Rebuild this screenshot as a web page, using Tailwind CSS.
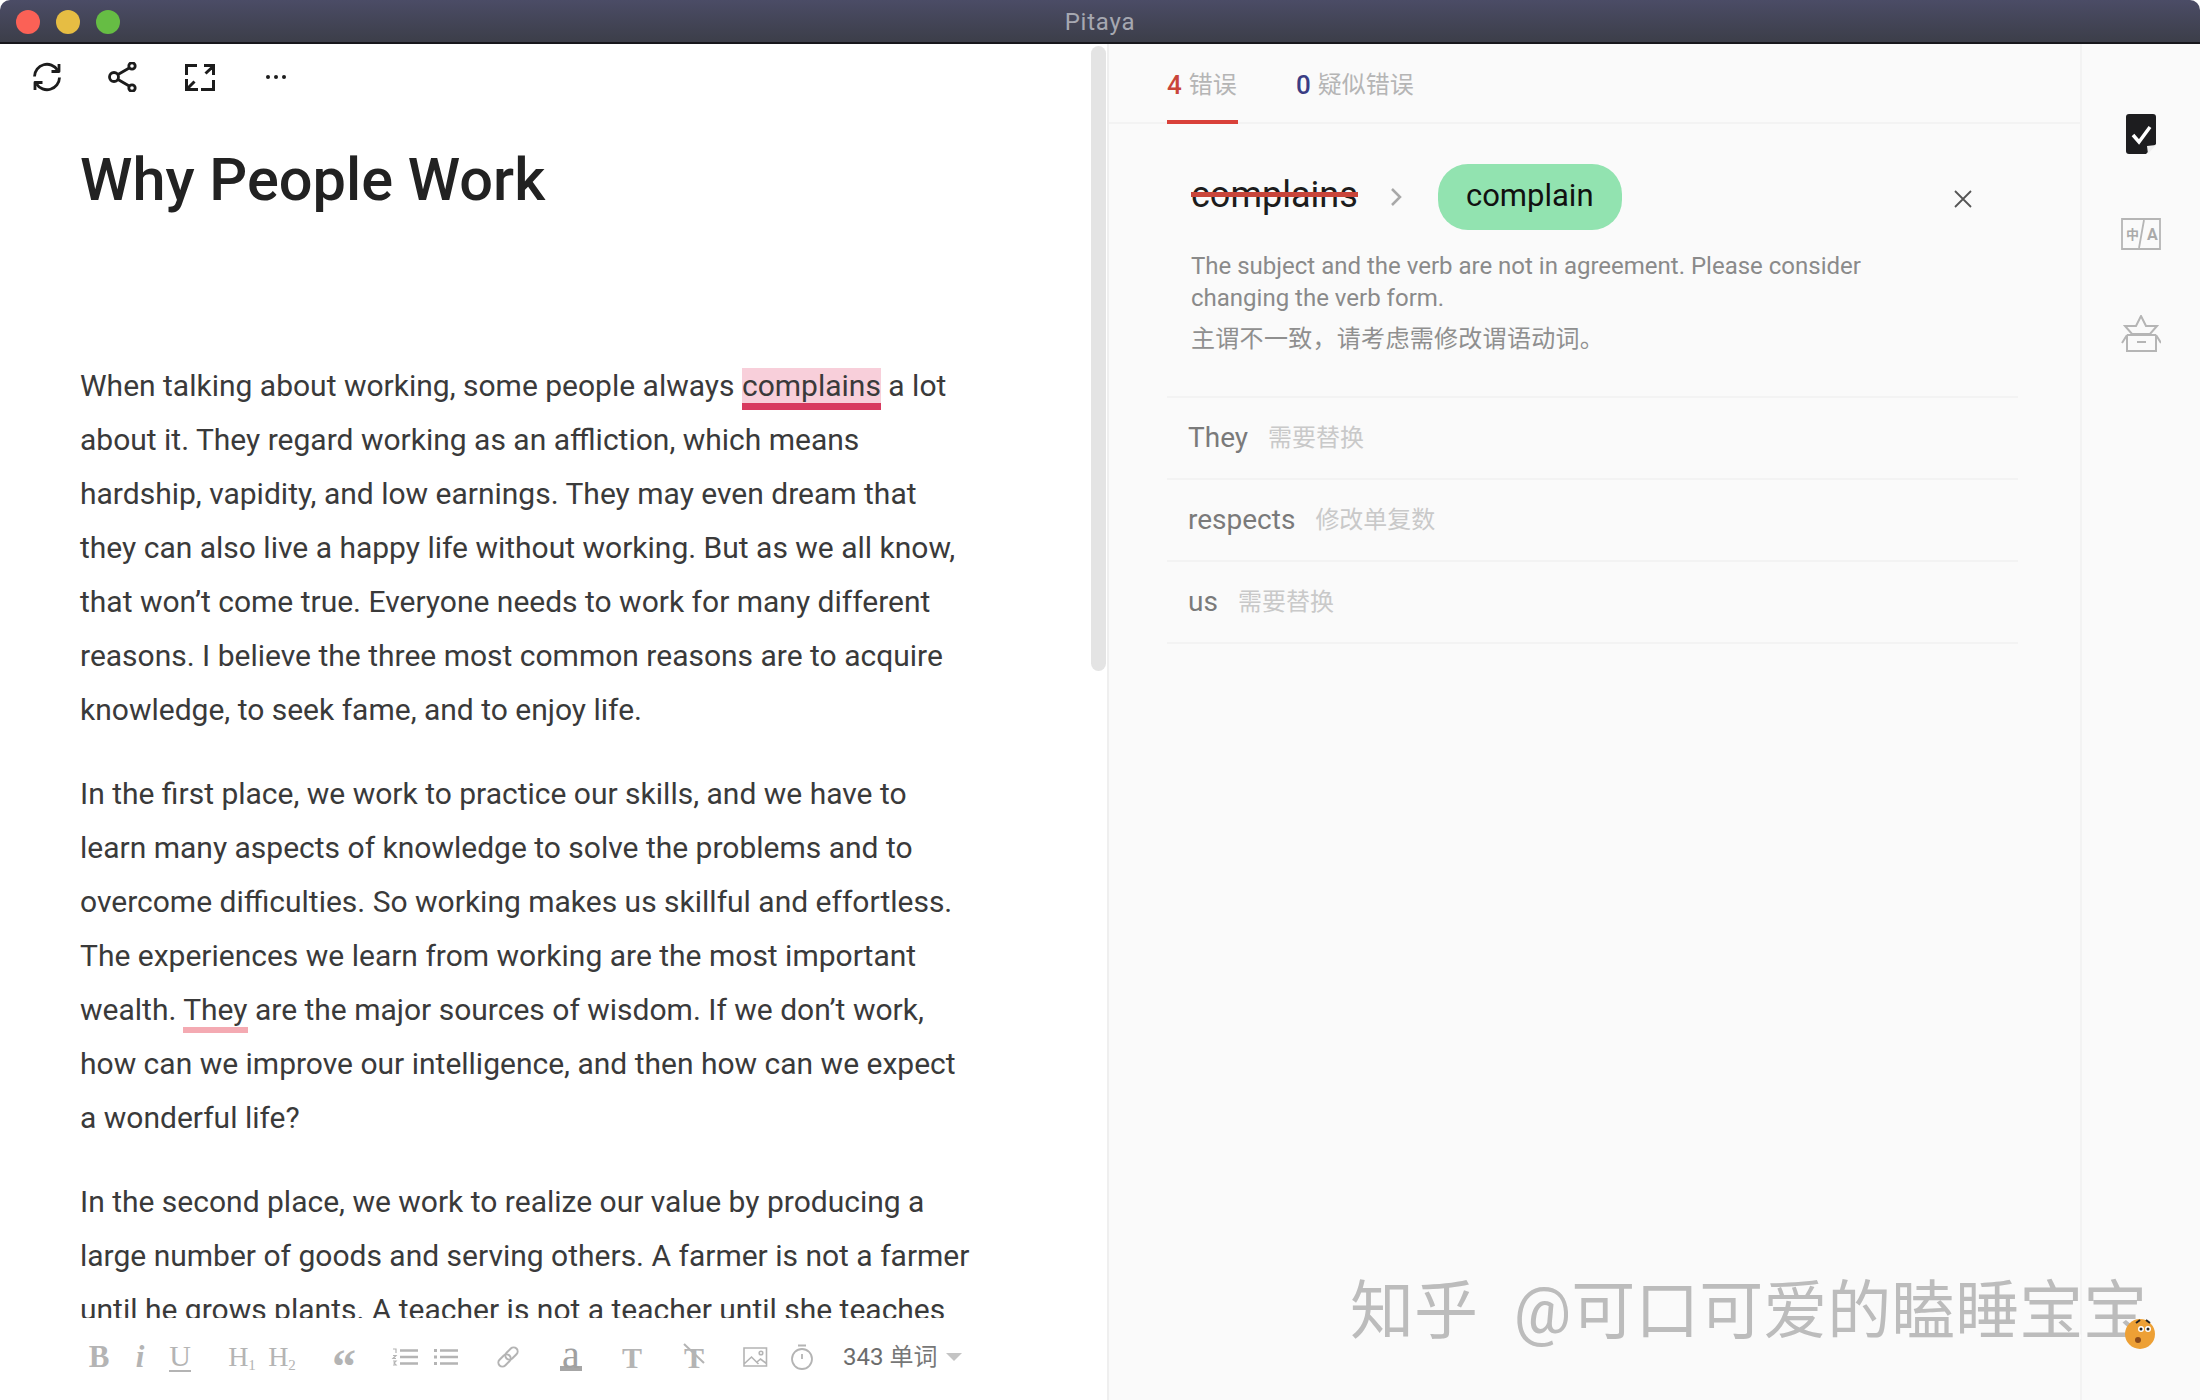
<!DOCTYPE html>
<html lang="en">
    <head>
        <meta charset="UTF-8" />
        <meta name="viewport" content="width=device-width, initial-scale=1.0" />
        <script src="https://cdn.jsdelivr.net/npm/@tailwindcss/browser@4"></script>
        <title>Pitaya</title>
    </head>
    <body class="bg-white">
        <div class="relative flex h-[1400px] w-[2200px] flex-col overflow-hidden font-['Roboto','Noto_Sans_CJK_SC',sans-serif]">
            <!-- title bar -->
            <div class="relative flex h-[44px] shrink-0 items-center justify-center rounded-t-[10px] border-b-2 border-[#17171c] bg-gradient-to-b from-[#4b4c66] to-[#3c3e49]">
                <div class="absolute left-[16px] top-[10px] flex gap-[16px]">
                    <span class="h-[24px] w-[24px] rounded-full bg-[#fb6156]"></span>
                    <span class="h-[24px] w-[24px] rounded-full bg-[#e6bd43]"></span>
                    <span class="h-[24px] w-[24px] rounded-full bg-[#66bd44]"></span>
                </div>
                <span class="pt-[2px] text-[24px] tracking-[0.8px] text-[#a6a8b1]">Pitaya</span>
            </div>

            <div class="flex min-h-0 flex-1">
                <!-- editor -->
                <div class="relative flex w-[1107px] shrink-0 flex-col bg-white">
                    <div class="flex h-[66px] shrink-0 items-center pl-[32px] text-[#1c1c1c]">
                        <svg class="h-[30px] w-[30px]" viewBox="0 0 30 30" fill="none" stroke="currentColor" stroke-width="2.800" stroke-linejoin="round">
                            <path d="M2.500 14.500A12.500 12.500 0 0 1 25.500 8" />
                            <path d="M27 2v7.500h-7.500" />
                            <path d="M27.500 15.500A12.500 12.500 0 0 1 4.500 22" />
                            <path d="M3 28v-7.500h7.500" />
                        </svg>
                        <svg class="ml-[46px] h-[30px] w-[30px]" viewBox="0 0 30 30" fill="none" stroke="currentColor" stroke-width="2.800">
                            <circle cx="6" cy="15" r="4.500" />
                            <circle cx="24" cy="4" r="3.200" />
                            <circle cx="24" cy="26" r="3.200" />
                            <path d="M10 12.500L21.200 6M10 17.500L21.200 24" />
                        </svg>
                        <svg class="ml-[47px] h-[27px] w-[30px]" viewBox="0 0 30 27" fill="none" stroke="currentColor" stroke-width="3">
                            <path d="M1.500 11V1.500H12M19 1.500h9.500V11M28 2.500l-7.500 7" />
                            <path d="M28.500 16v9.500H16M13 25.500H1.500V15M2 25l7.500-7.500" />
                        </svg>
                        <span class="ml-[51px] flex gap-[4px]">
                            <i class="h-[4px] w-[4px] rounded-full bg-[#1c1c1c]"></i>
                            <i class="h-[4px] w-[4px] rounded-full bg-[#1c1c1c]"></i>
                            <i class="h-[4px] w-[4px] rounded-full bg-[#1c1c1c]"></i>
                        </span>
                    </div>

                    <h1 class="ml-[80px] mt-[32px] text-[59.500px] leading-[76px] font-medium text-[#222]">Why People Work</h1>

                    <div class="mt-[141px] min-h-0 flex-1 overflow-hidden pl-[80px] text-[30px] leading-[54px] whitespace-nowrap text-[#3a3a3a]">
                        <p>
                            When talking about working, some people always <span class="bg-[#f8cfda] shadow-[0_7px_0_#d8395f]">complains</span> a lot<br />
                            about it. They regard working as an affliction, which means<br />
                            hardship, vapidity, and low earnings. They may even dream that<br />
                            they can also live a happy life without working. But as we all know,<br />
                            that won’t come true. Everyone needs to work for many different<br />
                            reasons. I believe the three most common reasons are to acquire<br />
                            knowledge, to seek fame, and to enjoy life.
                        </p>
                        <p class="mt-[30px]">
                            In the first place, we work to practice our skills, and we have to<br />
                            learn many aspects of knowledge to solve the problems and to<br />
                            overcome difficulties. So working makes us skillful and effortless.<br />
                            The experiences we learn from working are the most important<br />
                            wealth. <span class="shadow-[0_6px_0_#f4aab2]">They</span> are the major sources of wisdom. If we don’t work,<br />
                            how can we improve our intelligence, and then how can we expect<br />
                            a wonderful life?
                        </p>
                        <p class="mt-[30px]">
                            In the second place, we work to realize our value by producing a<br />
                            large number of goods and serving others. A farmer is not a farmer<br />
                            until he grows plants. A teacher is not a teacher until she teaches
                        </p>
                    </div>

                    <!-- format toolbar -->
                    <div class="flex h-[82px] shrink-0 items-center pb-[4px] pl-[84px] text-[#b4b4b4]">
                        <span class="w-[30px] text-center font-['Liberation_Serif',serif] text-[31px] font-bold">B</span>
                        <span class="ml-[11px] w-[30px] text-center font-['Liberation_Serif',serif] text-[31px] font-bold italic">i</span>
                        <span class="ml-[10px] flex w-[30px] justify-center"><span class="w-[22px] border-b-2 border-[#b4b4b4] text-center font-['Liberation_Serif',serif] text-[30px] leading-[28px]">U</span></span>
                        <span class="ml-[32px] w-[30px] text-center font-['Liberation_Serif',serif] text-[28px] whitespace-nowrap">H<sub class="text-[15px]">1</sub></span>
                        <span class="ml-[10px] w-[30px] text-center font-['Liberation_Serif',serif] text-[28px] whitespace-nowrap">H<sub class="text-[15px]">2</sub></span>
                        <span class="ml-[32px] h-[28px] w-[30px] text-center font-['Liberation_Serif',serif] text-[48px] leading-[48px] font-bold">“</span>
                        <svg class="ml-[31px] h-[18px] w-[30px]" viewBox="0 0 30 18" fill="none" stroke="currentColor" stroke-width="2.400">
                            <path d="M10 2.500h18M10 9h18M10 15.500h18" />
                            <path d="M3 1h3v4M3 7.500h3l-3 3h3M3 13h3l-2 2 2 2H3" stroke-width="1.200" />
                        </svg>
                        <svg class="ml-[11px] h-[18px] w-[30px]" viewBox="0 0 30 18" fill="none" stroke="currentColor" stroke-width="2.400">
                            <path d="M9 2.500h18M9 9h18M9 15.500h18" />
                            <path d="M3 2.500h3M3 9h3M3 15.500h3" stroke-width="3" />
                        </svg>
                        <span class="ml-[32px] flex w-[30px] justify-center">
                            <svg class="h-[22px] w-[22px]" viewBox="0 0 22 22" fill="none" stroke="currentColor" stroke-width="2">
                                <rect x="0.500" y="10.500" width="14" height="8" rx="4" transform="rotate(-45 7.500 14.500)" />
                                <rect x="7.500" y="3.500" width="14" height="8" rx="4" transform="rotate(-45 14.500 7.500)" />
                            </svg>
                        </span>
                        <span class="ml-[33px] flex w-[30px] justify-center"><span class="h-[27px] w-[22px] border-b-[5px] border-[#a6a6a6] text-center font-['Liberation_Serif',serif] text-[40px] leading-[21px] text-[#a0a0a0]">a</span></span>
                        <span class="ml-[31px] w-[30px] text-center font-['Liberation_Serif',serif] text-[30px] font-bold">T</span>
                        <span class="relative ml-[32px] w-[30px] text-center font-['Liberation_Serif',serif] text-[30px] font-bold">T<svg class="absolute left-[4px] top-[8px] h-[21px] w-[22px]" viewBox="0 0 22 21" stroke="currentColor" stroke-width="2"><path d="M1 1l20 19" /></svg></span>
                        <svg class="ml-[31px] h-[20px] w-[30px]" viewBox="0 0 30 20" fill="none" stroke="currentColor" stroke-width="1.600">
                            <path d="M4 1h22.500v18H4zM4 17l7.500-7 7 7M17 15l3.500-3 6 4.500" />
                            <circle cx="21" cy="6" r="1.800" />
                        </svg>
                        <svg class="ml-[17px] h-[26px] w-[30px]" viewBox="0 0 30 26" fill="none" stroke="currentColor" stroke-width="1.800">
                            <circle cx="15" cy="15" r="10" />
                            <path d="M11 1.500h8M15 10v5" />
                        </svg>
                        <span class="ml-[26px] text-[24px] whitespace-nowrap text-[#6c6c6c]">343 <span class="text-[#777]">单词</span></span>
                        <span class="ml-[9px] h-0 w-0 border-x-[8px] border-t-[8px] border-x-transparent border-t-[#c4c4c4]"></span>
                    </div>
                    <!-- scrollbar -->
                    <div class="absolute right-[1px] top-[2px] h-[625px] w-[15px] rounded-full bg-[#e4e4e4]"></div>
                </div>

                <!-- checks panel -->
                <div class="flex min-w-0 flex-1 flex-col border-l-2 border-[#efefef] bg-[#fafafa]">
                    <div class="flex h-[80px] shrink-0 border-b-2 border-[#f3f3f3] pl-[58px]">
                        <div class="flex h-[80px] w-[71px] items-start border-b-[4px] border-[#d9413a] pt-[24px] text-[26px] leading-[34px]">
                            <span class="font-medium text-[#c9453a]">4</span><span class="ml-[7px] text-[24px] text-[#b5b5b5]">错误</span>
                        </div>
                        <div class="ml-[58px] flex items-start pt-[24px] text-[26px] leading-[34px]">
                            <span class="font-medium text-[#3b3d84]">0</span><span class="ml-[7px] text-[24px] text-[#b5b5b5]">疑似错误</span>
                        </div>
                    </div>

                    <div class="ml-[58px] w-[851px]">
                        <div class="border-b-2 border-[#f3f3f3] pb-[41px] pl-[24px]">
                            <div class="mt-[40px] flex h-[66px] items-center">
                                <span class="relative mb-[5px] text-[36px] text-[#1c1c1c]">complains<i class="absolute inset-x-0 top-[24px] h-[5px] bg-[#c9453a]"></i></span>
                                <svg class="ml-[32px] h-[20px] w-[12px]" viewBox="0 0 12 20" fill="none" stroke="#a8a8a8" stroke-width="2.500"><path d="M2 2l8 8-8 8" /></svg>
                                <span class="ml-[36px] flex h-[66px] w-[184px] items-center justify-center rounded-[30px] bg-[#92e3b0] pb-[2px] text-[31px] text-[#111]">complain</span>
                                <svg class="ml-[331px] mt-[4px] h-[20px] w-[20px]" viewBox="0 0 20 20" stroke="#555" stroke-width="1.800"><path d="M2 2l16 16M18 2L2 18" /></svg>
                            </div>
                            <p class="mt-[20px] text-[24px] leading-[32px] whitespace-nowrap text-[#8a8a8a]">The subject and the verb are not in agreement. Please consider<br />changing the verb form.</p>
                            <p class="mt-[9px] text-[24px] leading-[32px] tracking-[0.3px] text-[#8f8f8f]">主谓不一致，请考虑需修改谓语动词。</p>
                        </div>
                        <div class="flex h-[82px] items-center border-b-2 border-[#f3f3f3] pl-[21px]">
                            <span class="text-[28px] text-[#7a7a7a]">They</span><span class="ml-[20px] text-[24px] text-[#c9c9c9]">需要替换</span>
                        </div>
                        <div class="flex h-[82px] items-center border-b-2 border-[#f3f3f3] pl-[21px]">
                            <span class="text-[28px] text-[#7a7a7a]">respects</span><span class="ml-[20px] text-[24px] text-[#c9c9c9]">修改单复数</span>
                        </div>
                        <div class="flex h-[82px] items-center border-b-2 border-[#f3f3f3] pl-[21px]">
                            <span class="text-[28px] text-[#7a7a7a]">us</span><span class="ml-[20px] text-[24px] text-[#c9c9c9]">需要替换</span>
                        </div>
                    </div>
                </div>

                <!-- right rail -->
                <div class="flex w-[120px] shrink-0 flex-col items-center border-l-2 border-[#f3f3f3] bg-[#fafafa] pt-[70px]">
                    <svg class="h-[40px] w-[30px]" viewBox="0 0 30 40">
                        <path d="M3 0h24a3 3 0 0 1 3 3v27L20 40H3a3 3 0 0 1-3-3V3a3 3 0 0 1 3-3z" fill="#1d1d1f" />
                        <path d="M7 21l6 7 11-15" fill="none" stroke="#fff" stroke-width="3.500" />
                        <path d="M30 31l-8 9-1-8z" fill="#eee" />
                    </svg>
                    <svg class="mt-[64px] h-[32px] w-[40px]" viewBox="0 0 40 32" fill="none" stroke="#b5b5b5" stroke-width="1.800">
                        <path d="M1 1h38v30H1zM23 2l-5 28" />
                        <text x="5" y="21" fill="#aaa" stroke="none" font-size="13" font-weight="700">中</text>
                        <text x="26" y="22" fill="#aaa" stroke="none" font-size="16" font-weight="700">A</text>
                    </svg>
                    <svg class="mt-[65px] h-[38px] w-[40px]" viewBox="0 0 40 38" fill="none" stroke="#b5b5b5" stroke-width="2">
                        <path d="M20 1l5 10h11l-7 8H11l-7-8h11z" />
                        <path d="M6 20v16h29V20M6 20h29M6 20l-5 8M35 20l5 8M16 27h9" />
                    </svg>
                </div>
            </div>

            <!-- watermark -->
            <div class="absolute left-[1350px] top-[1273px] text-[64px] leading-[78px] [word-spacing:20px] whitespace-nowrap text-[#bcbcbc] [text-shadow:2px_2px_0_#fafafa]">知乎 @可口可爱的瞌睡宝宝</div>
            <svg class="absolute left-[2124px] top-[1317px] h-[33px] w-[32px]" viewBox="0 0 32 33">
                <circle cx="16" cy="17" r="15" fill="#eda035" />
                <circle cx="17" cy="12" r="3" fill="#fff" />
                <circle cx="24" cy="12" r="3" fill="#fff" />
                <circle cx="17" cy="12" r="1.500" fill="#222" />
                <circle cx="24" cy="12" r="1.500" fill="#222" />
                <path d="M12 6l4-3M22 3l4 3" stroke="#222" stroke-width="2" fill="none" />
                <circle cx="14" cy="23" r="3" fill="#8a4a1a" />
            </svg>
        </div>
    </body>
</html>
